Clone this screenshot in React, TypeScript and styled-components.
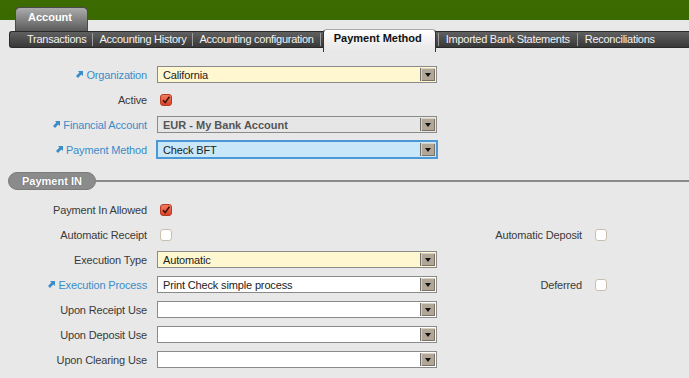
import styled, { createGlobalStyle, css } from 'styled-components';

const GlobalStyle = createGlobalStyle`
  html, body {
    margin: 0;
    padding: 0;
    background: #e8e8e8;
  }
  body {
    font-family: "Liberation Sans", Arial, sans-serif;
    font-size: 11px;
    color: #333;
    overflow: hidden;
  }
`;

const Header = styled.div`
  display: flex;
  flex-direction: column;
`;

const TopBar = styled.div`
  display: flex;
  align-items: flex-end;
  height: 31px;
  padding-left: 15px;
  background: linear-gradient(#3c6b02 0, #3a6900 20px, #e8e8e8 20px);
`;

const MainTab = styled.div`
  box-sizing: border-box;
  width: 73px;
  height: 24px;
  padding: 2px 0 0 12px;
  line-height: 14px;
  border: 1px solid #4a4a4a;
  border-bottom: none;
  border-radius: 5px 5px 0 0;
  background: linear-gradient(#acacac, #5a5a5a);
  color: #fff;
  font-weight: bold;
`;

const SubBar = styled.div`
  box-sizing: border-box;
  display: flex;
  align-items: stretch;
  height: 17px;
  margin-left: 9px;
  padding-left: 11px;
  background: linear-gradient(#606060, #383838);
  border: 1px solid #2a2a2a;
  border-right: none;
  border-radius: 3px 0 0 3px;
`;

const SubTab = styled.div<{ $wide?: boolean }>`
  padding: 0 ${(p) => (p.$wide ? 7 : 6)}px 2px;
  line-height: 14px;
  color: #f2f2f2;
  letter-spacing: -0.26px;
  white-space: nowrap;
`;

const Sep = styled.span`
  width: 1px;
  margin: 1px 0;
  background: #9c9c9c;
`;

const ActiveTab = styled.div`
  position: relative;
  z-index: 1;
  margin: -3px 2px -5px;
  padding: 1px 13px 0 10px;
  line-height: 14px;
  background: linear-gradient(#ffffff, #ececec 70%, #e8e8e8);
  border: 1px solid #a8a8a8;
  border-left-color: #333;
  border-right-color: #333;
  border-bottom: none;
  border-radius: 4px 4px 0 0;
  color: #111;
  font-weight: bold;
  white-space: nowrap;
`;

const Form = styled.div<{ $top?: number }>`
  display: grid;
  grid-template-columns: 147px 280px 135px 1fr;
  column-gap: 10px;
  grid-auto-rows: 25px;
  align-items: center;
  padding-top: ${(p) => p.$top ?? 0}px;
`;

const Label = styled.div<{ $link?: boolean }>`
  display: flex;
  justify-content: flex-end;
  align-items: center;
  gap: 3px;
  line-height: 14px;
  letter-spacing: -0.15px;
  white-space: nowrap;
  color: ${(p) => (p.$link ? '#3a8cc9' : '#3a3a3a')};
`;

const Field = styled.div<{ $bg?: string; $focus?: boolean }>`
  box-sizing: border-box;
  display: flex;
  align-items: center;
  height: 17px;
  border: 1px solid #8a8a8a;
  background: ${(p) => p.$bg ?? '#fff'};
  ${(p) =>
    p.$focus &&
    css`
      border-color: #4a98d6;
      box-shadow: 0 0 0 1px #4a98d6;
    `}
`;

const FieldText = styled.div<{ $readonly?: boolean }>`
  flex: 1;
  padding-left: 5px;
  line-height: 14px;
  white-space: nowrap;
  overflow: hidden;
  ${(p) =>
    p.$readonly
      ? css`
          color: #555;
          font-weight: bold;
        `
      : css`
          color: #222;
          letter-spacing: -0.15px;
        `}
`;

const DropButton = styled.div`
  box-sizing: border-box;
  width: 15px;
  height: 13px;
  margin-right: 1px;
  display: flex;
  align-items: center;
  justify-content: center;
  background: #b2a797;
  border-left: 1px solid #6e6e6e;
  box-shadow: inset 1px 1px 0 #d9d1c5, inset -1px -1px 0 #7b7266;

  &::after {
    content: '';
    border-left: 3px solid transparent;
    border-right: 3px solid transparent;
    border-top: 4px solid #111;
    margin-top: 1px;
  }
`;

const Check = styled.div<{ $on?: boolean }>`
  box-sizing: border-box;
  width: 12px;
  height: 12px;
  margin-left: 3px;
  border-radius: 3px;
  display: flex;
  align-items: center;
  justify-content: center;
  ${(p) =>
    p.$on
      ? css`
          background: linear-gradient(#f47c60, #d8432a);
          border: 1px solid #b73a22;
        `
      : css`
          background: #fff;
          border: 1px solid #c9bfae;
        `}
`;

const Section = styled.div`
  display: flex;
  align-items: center;
  padding: 10px 0 7px 8px;
`;

const Pill = styled.div`
  box-sizing: border-box;
  height: 18px;
  padding: 0 13px;
  line-height: 16px;
  border-radius: 9px;
  background: #8b8b8b;
  border: 1px solid #7c7c7c;
  color: #fff;
  font-weight: bold;
  white-space: nowrap;
  text-shadow: 0 0 1px rgba(40, 40, 80, 0.5);
`;

const Rule = styled.div`
  flex: 1;
  height: 2px;
  background: #8a8a8a;
`;

const LinkIcon = () => (
  <svg width="7" height="7" viewBox="0 0 7 7">
    <polygon points="2,0 7,0 7,5 5.3,3.4 2,7 0,5 3.4,1.6" fill="#3a8cc9" />
  </svg>
);

const CheckBox = ({ on }: { on?: boolean }) => (
  <Check $on={on}>
    {on && (
      <svg width="10" height="10" viewBox="0 0 10 10">
        <path d="M2 5.2 L4.2 7.6 L8.4 1.8" stroke="#3a1408" strokeWidth="1.6" fill="none" />
      </svg>
    )}
  </Check>
);

type SelectProps = {
  value?: string;
  bg?: string;
  focus?: boolean;
  readonly?: boolean;
};

const Select = ({ value, bg, focus, readonly }: SelectProps) => (
  <Field $bg={bg} $focus={focus}>
    <FieldText $readonly={readonly}>{value}</FieldText>
    <DropButton />
  </Field>
);

const FieldLabel = ({ text, link }: { text: string; link?: boolean }) => (
  <Label $link={link}>
    {link && <LinkIcon />}
    {text}
  </Label>
);

const Empty = () => <div />;

export default function App() {
  return (
    <>
      <GlobalStyle />
      <Header>
        <TopBar>
          <MainTab>Account</MainTab>
        </TopBar>
        <SubBar>
          <SubTab>Transactions</SubTab>
          <Sep />
          <SubTab>Accounting History</SubTab>
          <Sep />
          <SubTab>Accounting configuration</SubTab>
          <Sep />
          <ActiveTab>Payment Method</ActiveTab>
          <Sep />
          <SubTab $wide>Imported Bank Statements</SubTab>
          <Sep />
          <SubTab $wide>Reconciliations</SubTab>
        </SubBar>
      </Header>

      <Form $top={14}>
        <FieldLabel text="Organization" link />
        <Select value="California" bg="#fff7cf" />
        <Empty />
        <Empty />

        <FieldLabel text="Active" />
        <CheckBox on />
        <Empty />
        <Empty />

        <FieldLabel text="Financial Account" link />
        <Select value="EUR - My Bank Account" bg="#e6e6e6" readonly />
        <Empty />
        <Empty />

        <FieldLabel text="Payment Method" link />
        <Select value="Check BFT" bg="#c8e7f9" focus />
        <Empty />
        <Empty />
      </Form>

      <Section>
        <Pill>Payment IN</Pill>
        <Rule />
      </Section>

      <Form>
        <FieldLabel text="Payment In Allowed" />
        <CheckBox on />
        <Empty />
        <Empty />

        <FieldLabel text="Automatic Receipt" />
        <CheckBox />
        <FieldLabel text="Automatic Deposit" />
        <CheckBox />

        <FieldLabel text="Execution Type" />
        <Select value="Automatic" bg="#fff7cf" />
        <Empty />
        <Empty />

        <FieldLabel text="Execution Process" link />
        <Select value="Print Check simple process" />
        <FieldLabel text="Deferred" />
        <CheckBox />

        <FieldLabel text="Upon Receipt Use" />
        <Select />
        <Empty />
        <Empty />

        <FieldLabel text="Upon Deposit Use" />
        <Select />
        <Empty />
        <Empty />

        <FieldLabel text="Upon Clearing Use" />
        <Select />
        <Empty />
        <Empty />
      </Form>
    </>
  );
}
